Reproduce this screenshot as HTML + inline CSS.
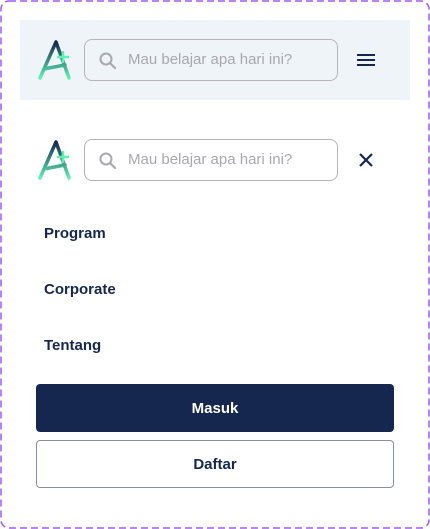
<!DOCTYPE html>
<html><head><meta charset="utf-8"><style>
body{margin:0;width:430px;height:529px;background:#fff;font-family:"Liberation Sans",sans-serif;position:relative;overflow:hidden}
.bar{position:absolute;left:20px;top:20px;width:390px;height:80px;background:#eff4f8}
.search{position:absolute;left:84px;width:254px;height:42px;border:1px solid #b5b5b8;border-radius:8px;box-sizing:border-box;background:transparent}
.search span{position:absolute;left:43px;top:11px;font-size:15px;color:#a8a8ad}
.search svg{position:absolute;left:13px;top:11px}
.logo{position:absolute;left:36px}
.nav{position:absolute;left:44px;font-size:15px;font-weight:bold;color:#15264f}
.btn{position:absolute;left:36px;width:358px;height:48px;border-radius:4px;box-sizing:border-box;display:flex;align-items:center;justify-content:center;font-size:15px;font-weight:bold}
</style></head><body>
<svg style="position:absolute;left:0;top:0" width="430" height="529"><rect x="1" y="1" width="428" height="527" rx="8" fill="none" stroke="#a259f7" stroke-width="1.5" stroke-dasharray="7 4"/></svg>
<div class="bar"></div>
<svg width="0" height="0" style="position:absolute"><defs><linearGradient id="g" x1="0" y1="0" x2="0" y2="1"><stop offset="0" stop-color="#16264f"/><stop offset="1" stop-color="#5df2b0"/></linearGradient></defs></svg>
<svg class="logo" style="top:36px" width="50" height="50" viewBox="0 0 50 50"><path d="M4 42 L20 6 L33 42 M8 33 L29 29" fill="none" stroke="url(#g)" stroke-width="3.5" stroke-linecap="round" stroke-linejoin="round"/><path d="M21 21h12M27 15v12" stroke="#5df2b0" stroke-width="2.5"/></svg>
<svg class="logo" style="top:136px" width="50" height="50" viewBox="0 0 50 50"><path d="M4 42 L20 6 L33 42 M8 33 L29 29" fill="none" stroke="url(#g)" stroke-width="3.5" stroke-linecap="round" stroke-linejoin="round"/><path d="M21 21h12M27 15v12" stroke="#5df2b0" stroke-width="2.5"/></svg>
<div class="search" style="top:39px"><svg width="20" height="20" viewBox="0 0 20 20"><circle cx="8" cy="8" r="5.5" fill="none" stroke="#a8a8ad" stroke-width="2"/><path d="M12 12l5 5" stroke="#a8a8ad" stroke-width="2.2" stroke-linecap="round"/></svg><span>Mau belajar apa hari ini?</span></div>
<div class="search" style="top:139px"><svg width="20" height="20" viewBox="0 0 20 20"><circle cx="8" cy="8" r="5.5" fill="none" stroke="#a8a8ad" stroke-width="2"/><path d="M12 12l5 5" stroke="#a8a8ad" stroke-width="2.2" stroke-linecap="round"/></svg><span>Mau belajar apa hari ini?</span></div>
<svg style="position:absolute;left:357px;top:53px" width="18" height="14"><path d="M0 2h18M0 7h18M0 12h18" stroke="#15264f" stroke-width="2"/></svg>
<svg style="position:absolute;left:359px;top:153px" width="14" height="14"><path d="M1 1l12 12M13 1L1 13" stroke="#15264f" stroke-width="2.2"/></svg>
<div class="nav" style="top:225px">Program</div>
<div class="nav" style="top:281px">Corporate</div>
<div class="nav" style="top:337px">Tentang</div>
<div class="btn" style="top:384px;background:#15264f;color:#fff">Masuk</div>
<div class="btn" style="top:440px;border:1px solid #8790a4;color:#15264f">Daftar</div>
</body></html>
